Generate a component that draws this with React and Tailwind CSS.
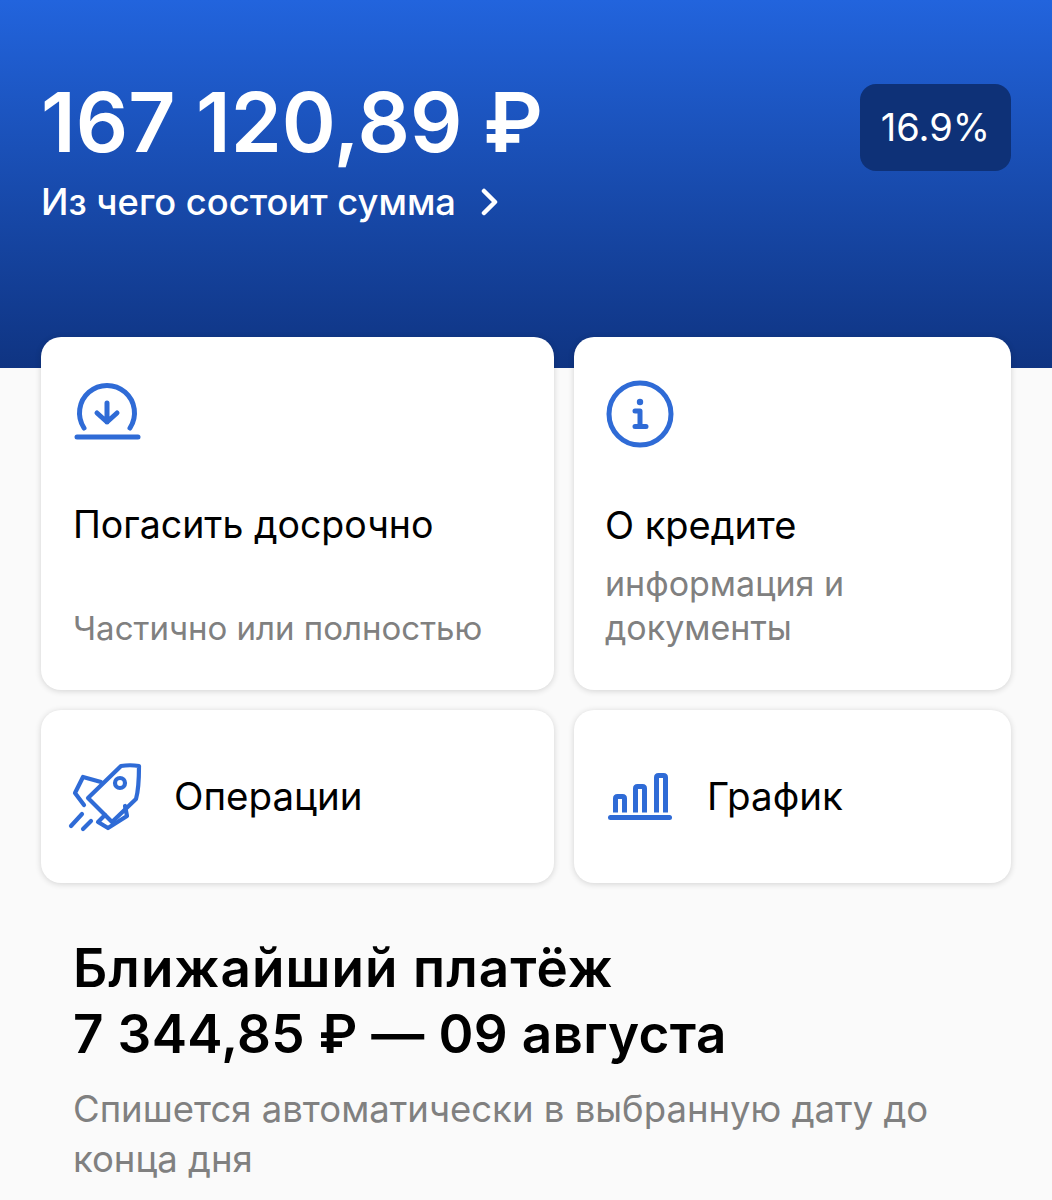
import React from "react";

const DownloadIcon = () => (
  <svg width="68" height="60" viewBox="0 0 68 60" fill="none" stroke="#2f6bd6" strokeWidth="5" strokeLinecap="round" strokeLinejoin="round">
    <path d="M11 48 A27.500 27.500 0 1 1 57 48" />
    <path d="M34 23 V42 M24 33 L34 42 L44 33" />
    <path d="M4 57 H65" />
  </svg>
);

const InfoIcon = () => (
  <svg width="68" height="68" viewBox="0 0 68 68" fill="none" stroke="#2f6bd6" strokeLinecap="round" strokeLinejoin="round">
    <circle cx="34" cy="34" r="31" strokeWidth="5" />
    <circle cx="34" cy="22" r="3.200" fill="#2f6bd6" stroke="none" />
    <path d="M29 31 H34 V46 M29 46.500 H40" strokeWidth="5" />
  </svg>
);

const RocketIcon = () => (
  <svg width="74" height="70" viewBox="0 0 74 70" fill="none" stroke="#2f6bd6" strokeWidth="4.200" strokeLinecap="round" strokeLinejoin="round">
    <path d="M71 4 C65 3 59 3 53 4 L20 36 L44 60 L68 37 C70 30 71 20 71 4 Z" />
    <circle cx="52" cy="21" r="5" />
    <path d="M33 20 L15 15 L7 31 L16 43" />
    <path d="M57 44 L59 54 L40 66 L30 60 L37 53" />
    <path d="M3 64 L14 52 M15 67 L23 59" />
  </svg>
);

const ChartIcon = () => (
  <svg width="66" height="50" viewBox="0 0 66 50" fill="none" stroke="#2f6bd6" strokeWidth="5" strokeLinejoin="round">
    <path d="M8.500 40.500 V26.500 Q8.500 24.500 10.500 24.500 H15.500 Q17.500 24.500 17.500 26.500 V40.500" />
    <path d="M28.500 40.500 V16.500 Q28.500 14.500 30.500 14.500 H35.500 Q37.500 14.500 37.500 16.500 V40.500" />
    <path d="M49.500 40.500 V5.500 Q49.500 3.500 51.500 3.500 H56.500 Q58.500 3.500 58.500 5.500 V40.500" />
    <path d="M3.500 45.500 H62.500" strokeLinecap="round" />
  </svg>
);

export default function App() {
  return (
    <div className="h-[1200px] overflow-hidden bg-[#fafafa] font-['Inter','Noto_Sans',sans-serif]">
      <div className="h-[368px] bg-gradient-to-b from-[#2264dd] to-[#0f3482] px-[41px] pt-[84px]">
        <div className="flex items-start justify-between">
          <div>
            <div className="text-[82px] font-semibold leading-[78px] text-white">167 120,89 ₽</div>
            <div className="mt-[18px] flex items-center gap-[24px] text-[36.300px] font-medium leading-[44px] text-white">
              Из чего состоит сумма
              <svg width="20" height="28" viewBox="0 0 20 28" fill="none" stroke="white" strokeWidth="4.500" strokeLinecap="round" strokeLinejoin="round">
                <path d="M4 3 L15 14 L4 25" />
              </svg>
            </div>
          </div>
          <div className="flex h-[87px] w-[151px] items-center justify-center rounded-[16px] bg-[#0e3177] text-[38px] text-white">16.9%</div>
        </div>
      </div>

      <div className="-mt-[31px] grid grid-cols-[513px_437px] gap-[20px] px-[41px]">
        <div className="flex h-[353px] flex-col rounded-[20px] bg-white px-[32px] pt-[43px] shadow-[0_1px_6px_rgba(0,0,0,0.16)]">
          <DownloadIcon />
          <div className="mt-[61px] text-[37.500px] leading-[48px] text-black">Погасить досрочно</div>
          <div className="mt-[57px] text-[33px] leading-[44px] text-[#808080]">Частично или полностью</div>
        </div>
        <div className="flex h-[353px] flex-col rounded-[20px] bg-white pl-[31px] pr-[32px] pt-[43px] shadow-[0_1px_6px_rgba(0,0,0,0.16)]">
          <div className="pl-[1px]">
            <InfoIcon />
          </div>
          <div className="mt-[53px] text-[38px] leading-[48px] text-black">О кредите</div>
          <div className="mt-[13px] text-[34px] leading-[44px] text-[#808080]">информация и документы</div>
        </div>
        <div className="flex h-[173px] items-center gap-[32px] rounded-[20px] bg-white pl-[27px] shadow-[0_1px_6px_rgba(0,0,0,0.16)]">
          <RocketIcon />
          <div className="text-[38.500px] text-black">Операции</div>
        </div>
        <div className="flex h-[173px] items-center gap-[34px] rounded-[20px] bg-white pl-[33px] shadow-[0_1px_6px_rgba(0,0,0,0.16)]">
          <ChartIcon />
          <div className="text-[38.500px] text-black">График</div>
        </div>
      </div>

      <div className="px-[73px] pt-[52px]">
        <div className="text-[53px] font-semibold leading-[66px] text-black">
          <div className="tracking-[1.100px]">Ближайший платёж</div>
          <div className="tracking-[0.350px]">7 344,85 ₽ — 09 августа</div>
        </div>
        <div className="mt-[17px] text-[36.500px] leading-[50px] text-[#808080]">
          Спишется автоматически в выбранную дату до конца дня
        </div>
      </div>
    </div>
  );
}
